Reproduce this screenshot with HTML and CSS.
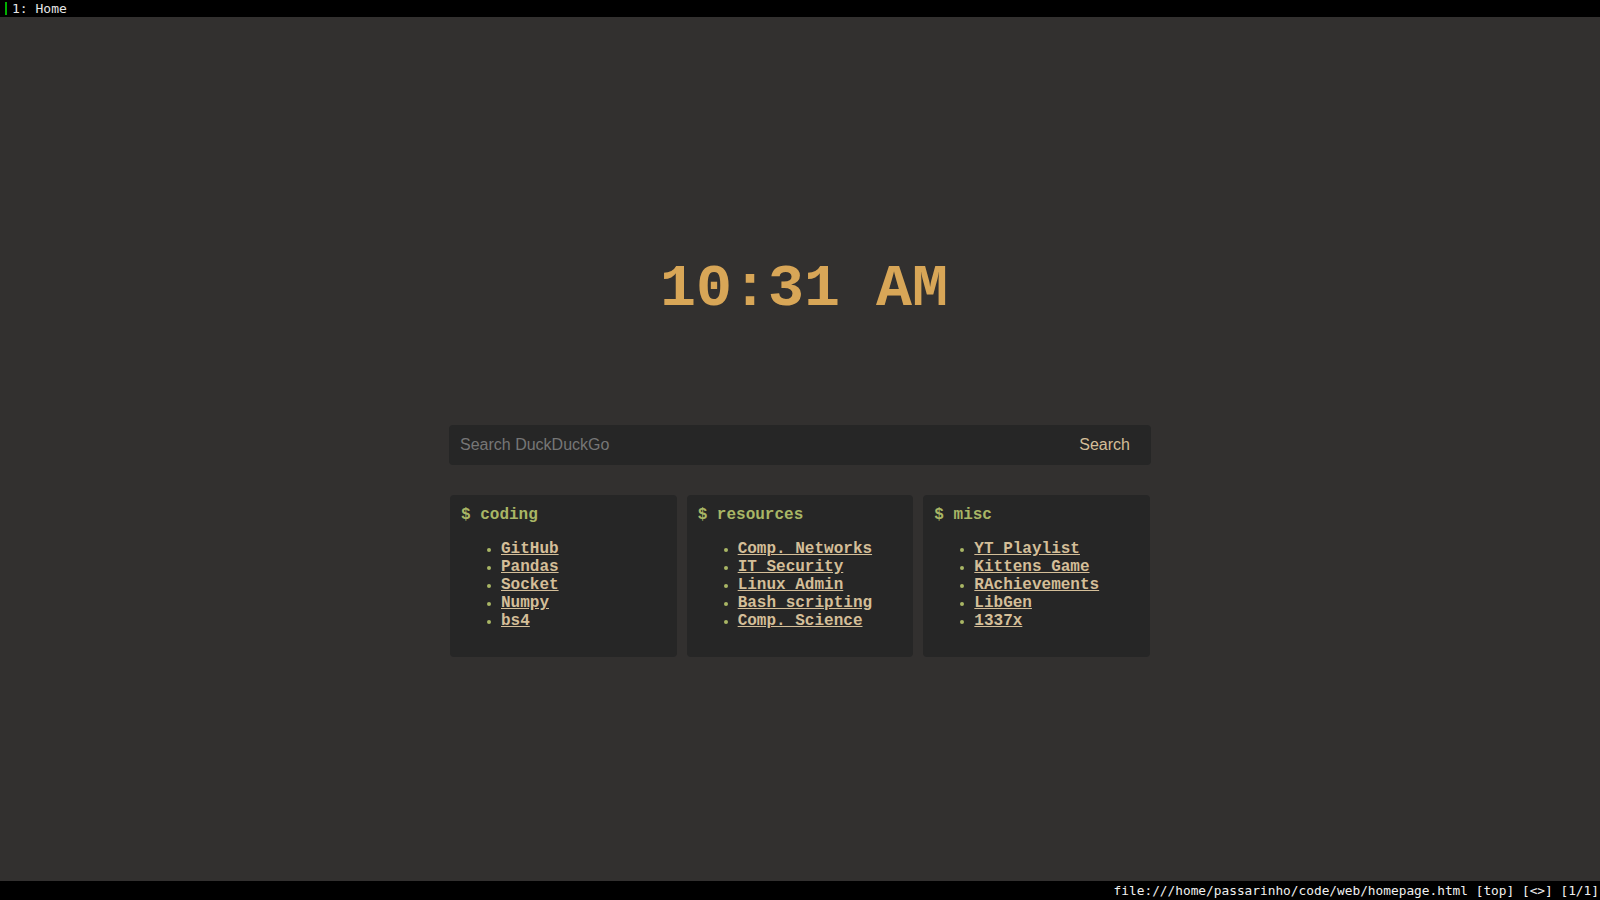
FILE: index.html
```html
<!DOCTYPE html>
<html lang="en">
<head>
<meta charset="utf-8">
<title>Home</title>
<link rel="stylesheet" href="styles.css">
</head>
<body>
<div class="tabbar">
  <div class="tab"><span class="tab-indicator"></span><span class="tab-title">1: Home</span></div>
</div>
<main class="page">
  <h1 class="clock">10:31 AM</h1>
  <form class="search">
    <input class="search-input" type="text" placeholder="Search DuckDuckGo">
    <button class="search-btn" type="button">Search</button>
  </form>
  <div class="cards">
    <section class="card">
      <h3 class="card-title">$ coding</h3>
      <ul class="card-list">
        <li><a href="#">GitHub</a></li>
        <li><a href="#">Pandas</a></li>
        <li><a href="#">Socket</a></li>
        <li><a href="#">Numpy</a></li>
        <li><a href="#">bs4</a></li>
      </ul>
    </section>
    <section class="card">
      <h3 class="card-title">$ resources</h3>
      <ul class="card-list">
        <li><a href="#">Comp. Networks</a></li>
        <li><a href="#">IT Security</a></li>
        <li><a href="#">Linux Admin</a></li>
        <li><a href="#">Bash scripting</a></li>
        <li><a href="#">Comp. Science</a></li>
      </ul>
    </section>
    <section class="card">
      <h3 class="card-title">$ misc</h3>
      <ul class="card-list">
        <li><a href="#">YT Playlist</a></li>
        <li><a href="#">Kittens Game</a></li>
        <li><a href="#">RAchievements</a></li>
        <li><a href="#">LibGen</a></li>
        <li><a href="#">1337x</a></li>
      </ul>
    </section>
  </div>
</main>
<div class="statusbar">file:///home/passarinho/code/web/homepage.html [top] [&lt;&gt;] [1/1]</div>
</body>
</html>
```

FILE: styles.css
```css
* { box-sizing: border-box; }

html, body {
  margin: 0;
  height: 100%;
}

body {
  background: #32302f;
  display: flex;
  flex-direction: column;
  font-family: "Liberation Mono", monospace;
  overflow: hidden;
}

.tabbar {
  height: 17px;
  background: #000;
  display: flex;
  align-items: stretch;
  flex-shrink: 0;
}

.tab {
  display: flex;
  align-items: center;
  padding-left: 5px;
}

.tab-indicator {
  width: 2px;
  height: 13px;
  background: #00b000;
  margin-right: 5px;
}

.tab-title {
  font-family: "DejaVu Sans Mono", monospace;
  font-size: 13px;
  color: #e6e6e6;
  line-height: 17px;
}

.page {
  flex: 1;
  display: flex;
  flex-direction: column;
  align-items: center;
  padding-top: 238px;
}

.clock {
  margin: 0;
  padding-left: 8px;
  font-family: "Liberation Mono", monospace;
  font-weight: bold;
  font-size: 60px;
  line-height: 68px;
  color: #d8a657;
}

.search {
  margin: 102px 0 0;
  width: 702px;
  height: 40px;
  display: flex;
  background: #262626;
  border-radius: 4px;
}

.search-input {
  flex: 1;
  background: transparent;
  border: none;
  outline: none;
  padding: 0 11px;
  font-family: "Liberation Sans", Arial, sans-serif;
  font-size: 16px;
  color: #d4be98;
}

.search-input::placeholder {
  color: #767676;
}

.search-btn {
  background: transparent;
  border: none;
  padding: 0 21px;
  font-family: "Liberation Sans", Arial, sans-serif;
  font-size: 16px;
  color: #d4be98;
}

.cards {
  margin-top: 30px;
  width: 700px;
  display: grid;
  grid-template-columns: repeat(3, 1fr);
  gap: 10px;
}

.card {
  background: #262626;
  border-radius: 4px;
  padding: 11px 11px 10px;
  height: 162px;
}

.card-title {
  margin: 0;
  font-size: 16px;
  line-height: 18px;
  font-weight: bold;
  color: #a9b665;
}

.card-list {
  margin: 16px 0;
  padding-left: 40px;
  list-style: disc;
}

.card-list li {
  font-size: 16px;
  line-height: 18px;
  font-weight: bold;
}

.card-list li::marker {
  color: #a9b665;
  font-size: 13px;
}

.card-list a {
  color: #d4be98;
  text-decoration: underline;
}

.statusbar {
  height: 19px;
  flex-shrink: 0;
  background: #000;
  color: #f0f0f0;
  font-family: "DejaVu Sans Mono", monospace;
  font-size: 12.8px;
  line-height: 19px;
  text-align: right;
  padding-right: 1px;
  white-space: nowrap;
}
```
